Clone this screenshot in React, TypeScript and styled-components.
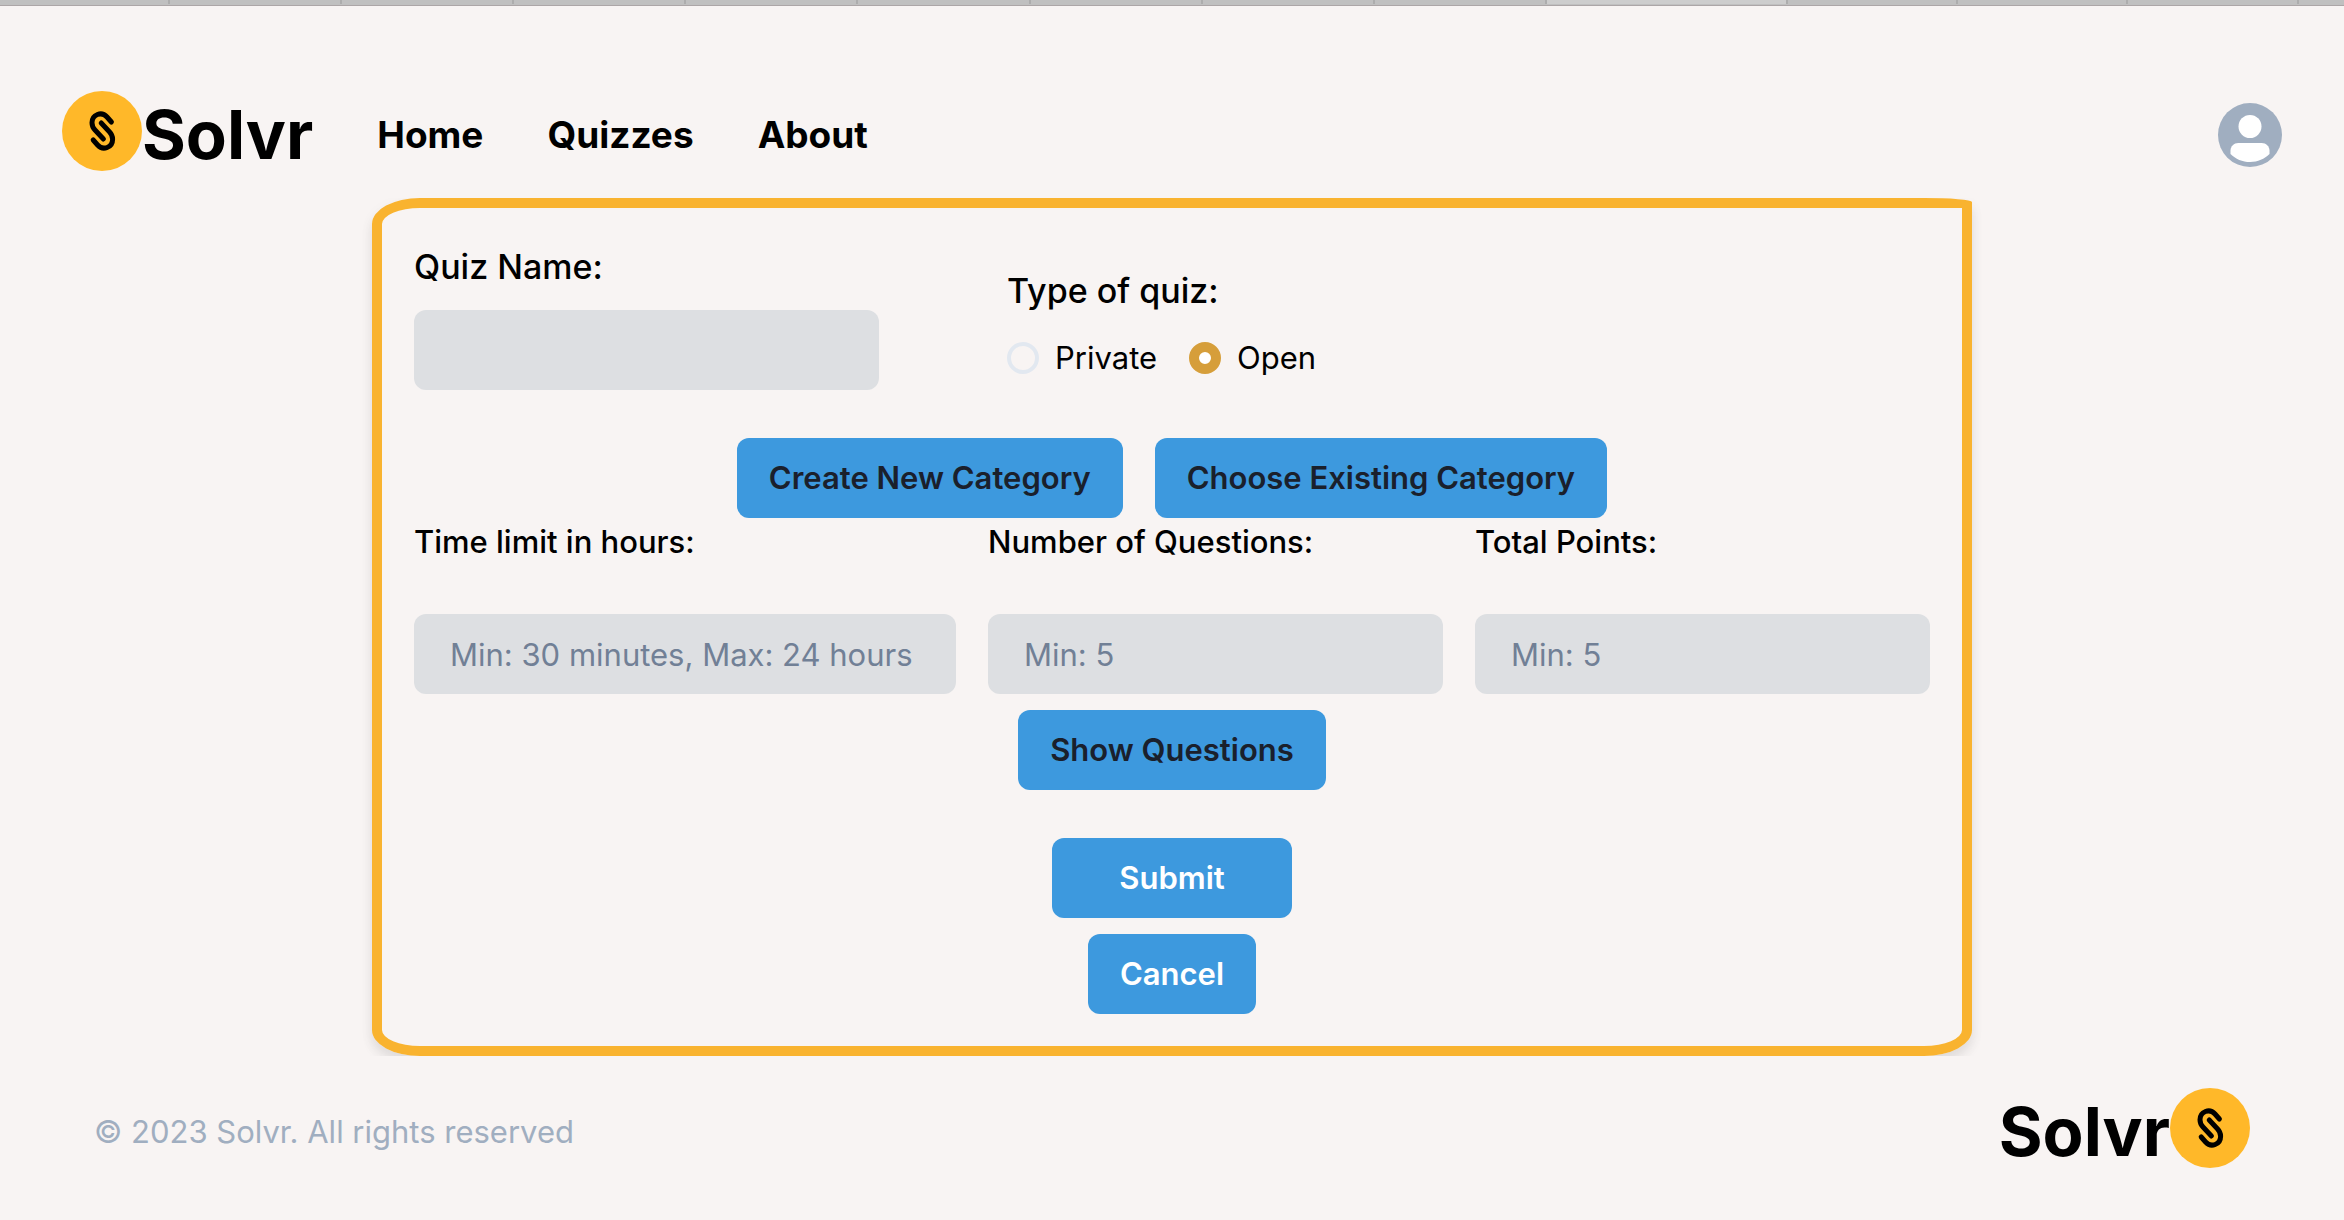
import React, { useState } from "react";
import styled, { createGlobalStyle } from "styled-components";

const GlobalStyle = createGlobalStyle`
  *, *::before, *::after { box-sizing: border-box; }
  body {
    margin: 0;
    background: #f8f4f3;
    color: #000;
    font-family: Inter, "Liberation Sans", sans-serif;
    font-size: 31px;
    line-height: 48px;
  }
  button, input { font: inherit; }
`;

const TabStrip = styled.div`
  display: flex;
  height: 6px;
  background: #c0c0c0;
  border-bottom: 1px solid #aca6a7;
`;

const TabEdge = styled.span<{ $grow: number; $active?: boolean }>`
  flex: ${(p) => p.$grow} 1 0;
  height: 4px;
  border-right: 2px solid #adadad;
  background: ${(p) => (p.$active ? "#cdcdcd" : "transparent")};

  &:last-child { border-right: 0; }
`;

const Header = styled.header`
  display: flex;
  align-items: center;
  justify-content: space-between;
  height: 192px;
  padding: 66px 62px 0;
`;

const HeaderStart = styled.div`
  display: flex;
  align-items: center;
  gap: 64px;
`;

const Brand = styled.a`
  display: flex;
  align-items: flex-start;
  color: #000;
  font-size: 67px;
  font-weight: 700;
  line-height: 88px;
  text-decoration: none;

  svg { display: block; flex: none; }
`;

const Nav = styled.nav`
  display: flex;
  gap: 64px;
`;

const NavLink = styled.a`
  color: #000;
  font-size: 37px;
  font-weight: 700;
  text-decoration: none;
`;

const AvatarButton = styled.button`
  width: 64px;
  height: 64px;
  padding: 0;
  border: 0;
  border-radius: 50%;
  background: #a0aec0;
  cursor: pointer;

  svg { display: block; }
`;

const Card = styled.form`
  display: flex;
  flex-direction: column;
  width: 100%;
  max-width: 1600px;
  margin: 0 auto;
  padding: 32px;
  border: 10px solid #f9b32f;
  border-radius: 48px 48px 48px 48px / 26px 4px 26px 26px;
  box-shadow: 0 8px 12px rgba(0, 0, 0, 0.08), 0 4px 16px rgba(0, 0, 0, 0.04);
  clip-path: inset(0 -24px);
`;

const TopRow = styled.div`
  display: flex;
  align-items: flex-start;
  gap: 128px;
`;

const NameField = styled.div`
  display: flex;
  flex: 0 1 465px;
  flex-direction: column;
  gap: 16px;
`;

const TypeField = styled.fieldset`
  margin: 0;
  padding: 24px 0 0;
  border: 0;
`;

const Heading = styled.label`
  font-size: 34px;
  font-weight: 500;
  line-height: 54px;
`;

const Legend = styled(Heading).attrs({ as: "div" })`
  margin-bottom: 16px;
`;

const Options = styled.div`
  display: flex;
  gap: 32px;
`;

const Option = styled.label`
  display: flex;
  align-items: center;
  gap: 16px;
`;

const Radio = styled.input`
  appearance: none;
  width: 32px;
  height: 32px;
  margin: 0;
  border: 4px solid #e2e8f0;
  border-radius: 50%;

  &:checked {
    border: 10px solid #d69e3a;
    background: #fff;
  }
`;

const TextInput = styled.input`
  width: 100%;
  height: 80px;
  padding: 0 36px;
  border: 0;
  border-radius: 12px;
  background: #dddfe2;
  color: #1a202c;

  &::placeholder { color: #718096; opacity: 1; }
`;

const CategoryRow = styled.div`
  display: flex;
  justify-content: center;
  gap: 32px;
  margin-top: 48px;
`;

const Button = styled.button<{ $light?: boolean; $wide?: boolean }>`
  height: 80px;
  min-width: ${(p) => (p.$wide ? "240px" : "0")};
  padding: 0 32px;
  border: 0;
  border-radius: 12px;
  background: #3d99de;
  color: ${(p) => (p.$light ? "#fff" : "#1a202c")};
  font-weight: 600;
  white-space: nowrap;
  cursor: pointer;
`;

const LimitsGrid = styled.div`
  display: grid;
  grid-template-columns: 542fr 455fr 455fr;
  gap: 32px;
`;

const LimitField = styled.div`
  display: flex;
  flex-direction: column;
  gap: 48px;
`;

const LimitLabel = styled.label`
  font-weight: 500;
`;

const Actions = styled.div<{ $space: number }>`
  display: flex;
  flex-direction: column;
  align-items: center;
  gap: 16px;
  margin-top: ${(p) => p.$space}px;
`;

const Footer = styled.footer`
  display: flex;
  align-items: center;
  justify-content: space-between;
  padding: 32px 94px;
`;

const Copyright = styled.p`
  margin: 0;
  color: #a0aec0;
`;

const LogoMark = () => (
  <svg width="80" height="80" viewBox="0 0 80 80" aria-hidden="true">
    <circle cx="40" cy="40" r="40" fill="#ffb829" />
    <g fill="none" stroke="#000" strokeWidth="5" strokeLinecap="round" strokeLinejoin="round">
      <path d="M49.4 31 L45 26 C39.5 20 30 23.5 30 31.8 C30 34.8 31 36.9 33 39 L41.4 48" />
      <path d="M31.2 49 L35.6 54 C41.1 60 50.6 56.5 50.6 48.2 C50.6 45.2 49.6 43.1 47.6 41 L39.2 32" />
    </g>
  </svg>
);

const tabs = [170, 172, 172, 172, 172, 172, 172, 172, 172, 242, 170, 170, 170, 46];

const limits = [
  { id: "time", label: "Time limit in hours:", hint: "Min: 30 minutes, Max: 24 hours" },
  { id: "count", label: "Number of Questions:", hint: "Min: 5" },
  { id: "points", label: "Total Points:", hint: "Min: 5" },
];

export default function App() {
  const [type, setType] = useState("Open");

  return (
    <>
      <GlobalStyle />
      <TabStrip aria-hidden="true">
        {tabs.map((grow, i) => (
          <TabEdge key={i} $grow={grow} $active={i === 9} />
        ))}
      </TabStrip>
      <Header>
        <HeaderStart>
          <Brand href="#">
            <LogoMark />
            Solvr
          </Brand>
          <Nav>
            <NavLink href="#home">Home</NavLink>
            <NavLink href="#quizzes">Quizzes</NavLink>
            <NavLink href="#about">About</NavLink>
          </Nav>
        </HeaderStart>
        <AvatarButton type="button" aria-label="Account">
          <svg width="64" height="64" viewBox="0 0 128 128" fill="#fff" aria-hidden="true">
            <path d="M103,102.1388 C93.094,111.92 79.3504,118 64.1638,118 C48.8056,118 34.9294,111.768 25,101.7892 L25,95.2 C25,86.8096 31.981,80 40.6,80 L87.4,80 C96.019,80 103,86.8096 103,95.2 L103,102.1388 Z" />
            <circle cx="64" cy="47" r="23" />
          </svg>
        </AvatarButton>
      </Header>
      <main>
        <Card onSubmit={(e) => e.preventDefault()}>
          <TopRow>
            <NameField>
              <Heading htmlFor="quiz-name">Quiz Name:</Heading>
              <TextInput id="quiz-name" type="text" />
            </NameField>
            <TypeField aria-labelledby="quiz-type">
              <Legend id="quiz-type">Type of quiz:</Legend>
              <Options>
                {["Private", "Open"].map((name) => (
                  <Option key={name}>
                    <Radio
                      type="radio"
                      name="quiz-type"
                      checked={type === name}
                      onChange={() => setType(name)}
                    />
                    {name}
                  </Option>
                ))}
              </Options>
            </TypeField>
          </TopRow>
          <CategoryRow>
            <Button type="button">Create New Category</Button>
            <Button type="button">Choose Existing Category</Button>
          </CategoryRow>
          <LimitsGrid>
            {limits.map((field) => (
              <LimitField key={field.id}>
                <LimitLabel htmlFor={field.id}>{field.label}</LimitLabel>
                <TextInput id={field.id} type="text" placeholder={field.hint} />
              </LimitField>
            ))}
          </LimitsGrid>
          <Actions $space={16}>
            <Button type="button">Show Questions</Button>
          </Actions>
          <Actions $space={48}>
            <Button type="submit" $light $wide>Submit</Button>
            <Button type="button" $light>Cancel</Button>
          </Actions>
        </Card>
      </main>
      <Footer>
        <Copyright>© 2023 Solvr. All rights reserved</Copyright>
        <Brand href="#">
          Solvr
          <LogoMark />
        </Brand>
      </Footer>
    </>
  );
}
